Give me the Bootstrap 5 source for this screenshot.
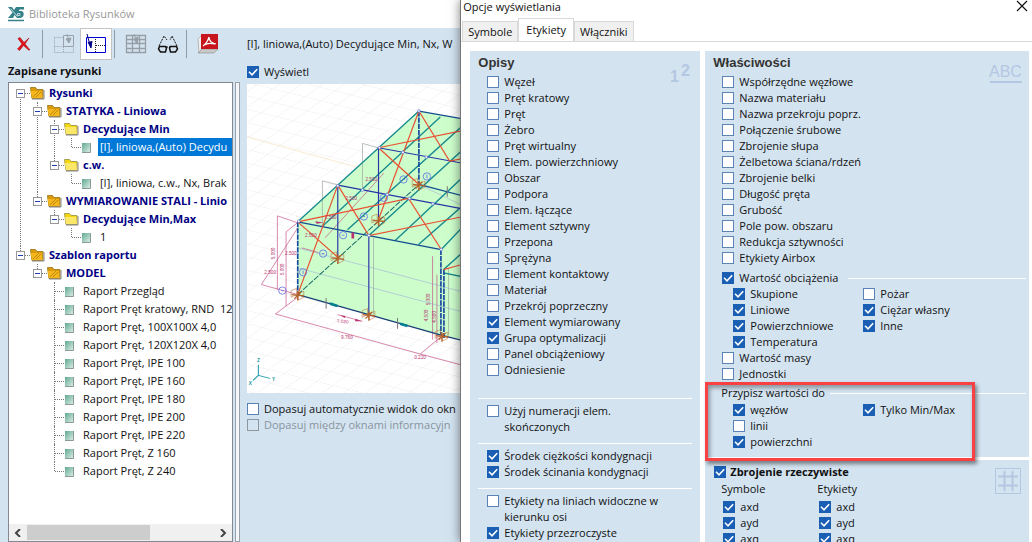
<!DOCTYPE html>
<html lang="pl">
<head>
<meta charset="utf-8">
<meta name="viewport" content="width=device-width, initial-scale=1">
<title>Biblioteka Rysunków</title>
<link rel="stylesheet" href="https://cdn.jsdelivr.net/npm/bootstrap@5.3.0/dist/css/bootstrap.min.css">
<style>
:root{--pane:#d3e3f0;--ink:#111;--navy:#000084}
body{font-family:"Open Sans","Noto Sans",sans-serif;font-size:11px;line-height:16px;color:var(--ink);background:var(--pane)}
.app{height:100vh}
.titlebar{height:28px;padding-left:8px;color:#999;gap:5px}
.sidepane{flex:0 0 240px}
.tools{height:32px;padding-left:8px}
.tool{width:32px;height:32px;border:1px solid transparent;border-radius:0;padding:0;display:flex;align-items:center;justify-content:center}
.tool.active{background:#fff;border:1px solid #c3c3c3}
.toolgap{width:8px;padding:2px 0 2px 2px}
.toolgap::before{content:"";display:block;height:28px;border-left:1px solid #8f9ba6}
.pane-title{padding:3px 8px;height:22px}
.treebox{width:225px;margin-left:8px;border:1px solid #828790;background:#fff}
.splitter{width:5px;margin:0 0 0 2px;border:1px solid #9aa0a8;background:#f4f7fa}
.tree,.tree ul{list-style:none;margin:0;padding:0}
.tree{padding:1px 0 0 3px;white-space:nowrap}
.tree li{position:relative;padding-left:17px}
.tree li::before{content:"";position:absolute;left:8px;top:0;bottom:0;border-left:1px dotted #777}
.tree li:last-child::before{bottom:auto;height:9px}
.tree>li:first-child::before{top:9px}
.tree li::after{content:"";position:absolute;left:9px;top:9px;width:9px;border-top:1px dotted #777}
.tree .node{display:flex;align-items:center;height:18px}
.tree .node svg{flex:none;width:18px;height:18px}
.tree .node a{color:var(--ink);text-decoration:none;padding:0 2px;line-height:18px}
.tree .dir a{color:var(--navy);font-weight:700}
.tree .node a.picked{background:#0078d7;color:#fff;flex:1}
.fold{position:relative;z-index:1;flex:none;width:9px;height:9px;margin:1px 4px 0 -13px;padding:0;border:1px solid #989898;background:#fff}
.fold::before{content:"";display:block;width:5px;margin:0 1px;border-top:1px solid #1d3fb0}
.hbar{height:17px;background:#f0f0f0}
.hbar button{border:0;background:none;width:18px;padding:0;display:flex;align-items:center;justify-content:center}
.hbar .thumb{width:123px;background:#cdcdcd;margin:1px 0}
.mainpane{padding:8px 0 0 7px;white-space:nowrap}
.view{height:309px;background:#fff}
.view svg{display:block;width:100%;height:100%}
.opt{display:flex;align-items:flex-start;gap:5px;min-height:16px}
.opt input[type=checkbox]{flex:none;width:12px;height:12px;margin:2px 0 0;border:1px solid #5b82b4;border-radius:0;background-color:#fff;box-shadow:none;float:none}
.opt input[type=checkbox]:checked{background-color:#1a5fb4;border-color:#1a5fb4;background-size:12px 12px;background-position:center;background-image:url("data:image/svg+xml,%3Csvg xmlns='http://www.w3.org/2000/svg' viewBox='0 0 12 12'%3E%3Cpath d='M2 5.8l3 3 5.2-5.6' fill='none' stroke='%23fff' stroke-width='1.6'/%3E%3C/svg%3E")}
.opt input[type=checkbox]:disabled{border-color:#8f979e;background-color:#d3e3f0;opacity:1}
.opt input[type=checkbox]:disabled~label{opacity:1;color:#8a949d}
.dialog{flex:0 0 55.4%;background:#fff;border-left:1px solid #777;box-shadow:0 0 10px rgba(0,0,0,.5);z-index:2}
.dialog-head{height:19px;padding:0 4px 0 2px;line-height:13px}
.dialog-tabs{border-bottom:1px solid #d9d9d9;padding-left:1px;height:23px;flex-wrap:nowrap}
.dialog-tabs .nav-link{color:var(--ink);border:1px solid #d9d9d9;border-bottom:0;border-radius:0;background:#f0f0f0;padding:2px 5px;height:20px;margin:0;line-height:16px}
.dialog-tabs .nav-link.active{background:#fff;height:23px;padding:3px 7px;color:var(--ink)}
.dialog-body{padding:9px 3px 0 9px;gap:5px}
.labels{flex:0 0 230px}
.box{background:var(--pane);padding:4px 0 0 8px;position:relative}
.box h2{font:700 13px/16px "Liberation Sans",Arial,sans-serif;color:#333;margin:0 0 3px}
.labels .opt{margin-left:9px}
.rule{border-top:1px solid #fff;margin:8px 8px 4px 0}
.rule.far{margin-top:20px}
.props .opt{margin-left:9px}
.props .inner .opt{margin-left:20px}
.inner{display:grid;grid-template-columns:130px 1fr;grid-auto-rows:16px;margin-top:1px}
.lined::after{content:"";flex:1;border-top:1px solid #fff;margin:8px 3px 0 5px}
.assign{position:relative;z-index:1;padding:3px 0 7px}
.assign .lined{margin-left:8px}
.callout{position:absolute;left:-8px;top:0;width:270px;bottom:-4px;border:3px solid #f94144;box-shadow:2px 3px 4px rgba(0,0,0,.45),inset 2px 3px 4px rgba(0,0,0,.35);pointer-events:none}
.upper{z-index:1}
.corner{position:absolute;right:6px;color:#b4c7e2;font-family:"Liberation Sans",Arial,sans-serif}
.digits{top:9px;right:8px}
.abc{top:11px}
.mesh{top:7px;right:8px}
.second-box{margin-top:3px}
.props .opt.head{margin-left:1px;gap:4px}
.rebar{display:grid;grid-template-columns:96px 1fr;grid-auto-rows:16px;margin:1px 0 0 8px}
.props .rebar .opt{margin:2px 0 0 2px}
</style>
</head>
<body>
<svg width="0" height="0" class="position-absolute" aria-hidden="true">
  <defs>
    <linearGradient id="leafFill" x1="0" y1="0" x2="1" y2="1"><stop offset="0" stop-color="#5fa890"/><stop offset="1" stop-color="#d9ece4"/></linearGradient>
    <symbol id="dirDark" viewBox="0 0 18 18"><path d="M1.500 3.500h5l1.500 2h6v9h-11z" fill="#d99a0b" stroke="#a9842a"/><path d="M3 14l-1.500-7h11l1 7z" fill="#f3b71d"/><path d="M4 13l6-6M7 13l5-5" stroke="#c48a10"/><path d="M3 15h12V6" fill="none" stroke="#858585"/></symbol>
    <symbol id="dirLight" viewBox="0 0 18 18"><path d="M1.500 3.500h5l1.500 2h6v9h-11z" fill="#f5d90e" stroke="#a9a050"/><path d="M3 14l-1-7h11l1 7z" fill="#fbe768"/><path d="M3 15h12V6" fill="none" stroke="#858585"/></symbol>
    <symbol id="leaf" viewBox="0 0 18 18"><path d="M2 5h8v9H2z" fill="url(#leafFill)"/><path d="M2 14.500h8.500V5" fill="none" stroke="#8a9a94"/></symbol>
  </defs>
</svg>
<div class="app d-flex overflow-hidden">
  <section class="d-flex flex-column flex-fill overflow-hidden" style="min-width:0">
    <header class="titlebar bg-white d-flex align-items-center flex-shrink-0">
      <svg width="16" height="15" viewBox="0 0 16 15" aria-hidden="true"><path d="M0 0h4l2 3 2-3h8v2.500h-4.500l-.5 1.500h2c4 0 3.500 7-1 7H9L6.500 8 5 11H0l4.500-5.500z" fill="#35818a"/><path d="M9.500 6.500h2.500v2H9.500zM2.500 1.500l7 8" stroke="#d9efef" stroke-width=".8" fill="none"/><path d="M0 13.500h16" stroke="#35818a" stroke-width="1.500"/></svg>
      <span>Biblioteka Rysunków</span>
    </header>
    <div class="d-flex flex-fill" style="min-height:0">
      <div class="sidepane d-flex flex-column">
        <div class="tools d-flex flex-shrink-0" role="toolbar" aria-label="Narzędzia">
          <button class="btn tool" aria-label="Usuń"><svg width="16" height="16" viewBox="0 0 16 16"><path d="M2 2.500l2-1 4 5 5-4.500-4 6L14 14h-1.500L7.500 9.500 3.500 14.500 1.500 13l4.500-5z" fill="#e3131b" stroke="#a80d12" stroke-width=".6"/></svg></button>
          <span class="toolgap"></span>
          <button class="btn tool" aria-label="Okno"><svg width="22" height="22" viewBox="0 0 22 22" fill="none" stroke="#9aa3ab"><path d="M1.500 4.500h9M1.500 4.500v15h19v-6M1.500 13.500h9M10.500 14v5" stroke-dasharray="1 1"/><path d="M10.500 2.500h10v11h-10z" stroke="#9aa3ab"/><path d="M14 1l2 6M13 6l3 4 2-5z" fill="#9aa3ab"/></svg></button>
          <button class="btn tool active" aria-label="Widok"><svg width="22" height="22" viewBox="0 0 22 22" fill="none"><path d="M1.500 4.500h19v15h-19z" stroke="#0000d6"/><path d="M10.500 6v13M11 12.500h9" stroke="#222" stroke-dasharray="1 1"/><path d="M2 1l3 11" stroke="#000084"/><path d="M3 9l3 6 1-7" stroke="#000084" fill="#000084"/></svg></button>
          <span class="toolgap"></span>
          <button class="btn tool" aria-label="Tabela"><svg width="22" height="22" viewBox="0 0 22 22" fill="none" stroke="#969ea6"><path d="M1.500 2.500h19v17h-19zM1.500 6.500h19M1.500 10.500h19M1.500 15.500h19M7.500 3v16M14.500 3v16" stroke-width="1.300"/><path d="M9 1l3 9M9 6l3 5 1-7z" fill="#969ea6"/></svg></button>
          <button class="btn tool" aria-label="Znajdź"><svg width="22" height="22" viewBox="0 0 22 22" fill="none" stroke="#111"><path d="M2.500 13.500h6l1 1.500-1 4h-5l-2-3zM13.500 13.500h6l1 2.500-2 3h-5l-1-4z" stroke-width="1.500"/><path d="M9 14h4M2 13L7 3l3 4M20 13L15 3l-2 4" stroke-dasharray="2 1"/></svg></button>
          <span class="toolgap"></span>
          <button class="btn tool" aria-label="Eksport PDF"><svg width="22" height="22" viewBox="0 0 22 22"><path d="M1 6l4-4v14l-3 4z" fill="#eee" stroke="#999" stroke-width=".6"/><path d="M5 16h16l-4 4H1z" fill="#c9c9c9" stroke="#888" stroke-width=".6"/><path d="M4 1h17v15H4z" fill="#c8141d"/><path d="M12 4c-1 4-2 6-6 9M12 4c0 4 2 6 7 7M7 12c3-2 7-2 11-1" fill="none" stroke="#fff" stroke-width="1.200"/></svg></button>
        </div>
        <div class="pane-title fw-bold flex-shrink-0">Zapisane rysunki</div>
        <div class="d-flex flex-fill" style="min-height:0">
          <div class="treebox d-flex flex-column">
            <div class="flex-fill overflow-hidden" style="min-height:0">
            <ul class="tree">
              <li><div class="node dir"><button class="fold" aria-label="Zwiń"></button><svg><use href="#dirDark"/></svg><a href="#">Rysunki</a></div>
                <ul>
                  <li><div class="node dir"><button class="fold" aria-label="Zwiń"></button><svg><use href="#dirDark"/></svg><a href="#">STATYKA - Liniowa</a></div>
                    <ul>
                      <li><div class="node dir"><button class="fold" aria-label="Zwiń"></button><svg><use href="#dirLight"/></svg><a href="#">Decydujące Min</a></div>
                        <ul><li><div class="node"><svg><use href="#leaf"/></svg><a href="#" class="picked">[I], liniowa,(Auto) Decydu</a></div></li></ul></li>
                      <li><div class="node dir"><button class="fold" aria-label="Zwiń"></button><svg><use href="#dirLight"/></svg><a href="#">c.w.</a></div>
                        <ul><li><div class="node"><svg><use href="#leaf"/></svg><a href="#">[I], liniowa, c.w., Nx, Brak</a></div></li></ul></li>
                    </ul></li>
                  <li><div class="node dir"><button class="fold" aria-label="Zwiń"></button><svg><use href="#dirDark"/></svg><a href="#">WYMIAROWANIE STALI - Linio</a></div>
                    <ul>
                      <li><div class="node dir"><button class="fold" aria-label="Zwiń"></button><svg><use href="#dirLight"/></svg><a href="#">Decydujące Min,Max</a></div>
                        <ul><li><div class="node"><svg><use href="#leaf"/></svg><a href="#">1</a></div></li></ul></li>
                    </ul></li>
                </ul></li>
              <li><div class="node dir"><button class="fold" aria-label="Zwiń"></button><svg><use href="#dirDark"/></svg><a href="#">Szablon raportu</a></div>
                <ul>
                  <li><div class="node dir"><button class="fold" aria-label="Zwiń"></button><svg><use href="#dirDark"/></svg><a href="#">MODEL</a></div>
                    <ul>
                      <li><div class="node"><svg><use href="#leaf"/></svg><a href="#">Raport Przegląd</a></div></li>
                      <li><div class="node"><svg><use href="#leaf"/></svg><a href="#">Raport Pręt kratowy, RND&nbsp; 12</a></div></li>
                      <li><div class="node"><svg><use href="#leaf"/></svg><a href="#">Raport Pręt, 100X100X 4,0</a></div></li>
                      <li><div class="node"><svg><use href="#leaf"/></svg><a href="#">Raport Pręt, 120X120X 4,0</a></div></li>
                      <li><div class="node"><svg><use href="#leaf"/></svg><a href="#">Raport Pręt, IPE 100</a></div></li>
                      <li><div class="node"><svg><use href="#leaf"/></svg><a href="#">Raport Pręt, IPE 160</a></div></li>
                      <li><div class="node"><svg><use href="#leaf"/></svg><a href="#">Raport Pręt, IPE 180</a></div></li>
                      <li><div class="node"><svg><use href="#leaf"/></svg><a href="#">Raport Pręt, IPE 200</a></div></li>
                      <li><div class="node"><svg><use href="#leaf"/></svg><a href="#">Raport Pręt, IPE 220</a></div></li>
                      <li><div class="node"><svg><use href="#leaf"/></svg><a href="#">Raport Pręt, Z 160</a></div></li>
                      <li><div class="node"><svg><use href="#leaf"/></svg><a href="#">Raport Pręt, Z 240</a></div></li>
                    </ul></li>
                </ul></li>
            </ul>
            </div>
            <div class="hbar d-flex flex-shrink-0">
              <button aria-label="W lewo"><svg width="8" height="8" viewBox="0 0 8 8"><path d="M6 0L2 4l4 4" fill="none" stroke="#444" stroke-width="2"/></svg></button>
              <div class="thumb"></div>
              <button class="ms-auto" aria-label="W prawo"><svg width="8" height="8" viewBox="0 0 8 8"><path d="M2 0l4 4-4 4" fill="none" stroke="#444" stroke-width="2"/></svg></button>
            </div>
          </div>
          <div class="splitter"></div>
        </div>
      </div>
      <main class="mainpane flex-fill overflow-hidden">
        <div class="mb-2 pb-1">[I], liniowa,(Auto) Decydujące Min, Nx, W</div>
        <div class="opt mb-1"><input class="form-check-input" type="checkbox" id="show" checked><label for="show">Wyświetl</label></div>
        <div class="view">
          <svg viewBox="21 9 639 927" preserveAspectRatio="xMinYMin slice" font-family="Liberation Sans, sans-serif" font-size="14" role="img" aria-label="Model 3D hali">
            <defs>
              <pattern id="gridLines" width="48" height="48" patternUnits="userSpaceOnUse" patternTransform="matrix(1 .25 .87 -.62 0 0)"><path d="M0 0h48M0 0v48" stroke="#e0e0e5" stroke-width="2" fill="none"/></pattern>
              <g id="foot" fill="none" stroke="#b5622a"><path d="M-20-12l16-6v18l-16 8zM2-4l16-6v18L2 16z" stroke-width="1.500"/><path d="M-18 0l36 4M0-10v28M-10 12l20-20" stroke-width="4"/></g>
            </defs>
            <path d="M21 9h639v927H21z" fill="url(#gridLines)"/>
            <path d="M21 168l395 108" stroke="#f8dfba" stroke-width="2"/>
            <path d="M173 422L536 90l124 22v662l-55-12-219-62-213-60z" fill="#ccfdcb"/>
            <g stroke="#a6b8d8" stroke-width="2" fill="none"><path d="M173 500l487 130M173 560l487 130M536 310l124 60"/></g>
            <g stroke="#9aa39c" stroke-width="2" fill="none"><path d="M247 437v-138l46 12M367 325v-138l50 14M400 470v230M625 560v200"/></g>
            <g stroke="#c54d83" stroke-width="2" fill="none"><path d="M112 404v222M138 452v222M112 404l58 20M138 452l35-28M64 610l109-170M64 610l110 30M106 698l67-50M106 698l434 120 120 32M292 700l75 20M577 525v250M590 580v205M540 818l60-50M255 470l176-194M185 500l50 14"/></g>
            <g stroke="#16898d" stroke-width="4" fill="none"><path d="M173 422L536 90M247 435L600 108M322 446L660 140M386 463L660 213M465 478L660 295M535 490L660 380M603 505l57-60M610 565l50-45M610 575l50 10"/></g>
            <path d="M173 640L536 310" stroke="#176b68" stroke-width="3" stroke-dasharray="18 4"/>
            <g stroke="#2733a7" stroke-width="3.500" fill="none"><path d="M415 200v215M293 312v216M386 463v237M415 200l245 45M293 312l367 70"/><path d="M536 90l124 22M173 422l430 83M536 310l124 32" stroke="#134d91" stroke-width="4"/><path d="M173 640l213 60 219 62 55 14" stroke="#163e77"/></g>
            <g stroke="#1748a0" stroke-width="5" stroke-dasharray="16 3"><path d="M536 90v220M173 422v218M602 505v257M611 565v205"/></g>
            <g stroke="#ea4f31" stroke-width="3.500" fill="none"><path d="M536 90L415 415M536 90l92 150 32-6M660 150l-245 50 121 110M293 312L173 640M293 312l93 151 274-55M173 422l332-70 98 153M173 422l120 106M610 565l50-14"/></g>
            <path d="M270 667l22 7M480 727l22 7" stroke="#007e90" stroke-width="8"/>
            <path d="M258 650v32M472 710v32M621 315v32" stroke="#777" stroke-width="3"/>
            <use href="#foot" x="173" y="640"/><use href="#foot" x="293" y="530"/><use href="#foot" x="415" y="417"/><use href="#foot" x="536" y="310"/><use href="#foot" x="386" y="700"/><use href="#foot" x="605" y="763"/>
            <g fill="none" stroke="#6571e4" stroke-width="2.500"><circle cx="490" cy="295" r="11"/><circle cx="560" cy="286" r="11"/><circle cx="431" cy="350" r="11"/><circle cx="371" cy="406" r="11"/><circle cx="309" cy="462" r="11"/><circle cx="249" cy="517" r="11"/><circle cx="189" cy="573" r="11"/><circle cx="127" cy="628" r="11"/><path d="M486 295h8M560 280v12M427 350h8M367 406h8M305 462h8M245 517h8M189 568v10M123 628h8"/></g>
            <g fill="#fff" stroke="#596fd0" stroke-width="2"><circle cx="536" cy="90" r="4"/><circle cx="418" cy="200" r="4"/><circle cx="293" cy="314" r="4"/><circle cx="176" cy="420" r="4"/><circle cx="488" cy="214" r="4"/><circle cx="558" cy="228" r="4"/><circle cx="367" cy="327" r="4"/><circle cx="441" cy="340" r="4"/><circle cx="508" cy="352" r="4"/><circle cx="578" cy="368" r="4"/><circle cx="386" cy="463" r="4"/><circle cx="603" cy="505" r="4"/></g>
            <g fill="#b8326f"><text x="376" y="301">2.500</text><text x="316" y="357">2.500</text><text x="254" y="414">2.500</text><text x="195" y="468">2.500</text><text x="135" y="522">2.500</text><text x="73" y="578">2.500</text><text x="290" y="722" transform="rotate(8 290 722)">1.020</text><text x="303" y="773">9.760</text><text x="522" y="833">0.220</text><text transform="translate(106 534) rotate(-90)">5.000</text><text transform="translate(131 582) rotate(-90)">5.000</text><text transform="translate(570 672) rotate(-90)">5.000</text><text transform="translate(564 720) rotate(-90)">4.500</text><text transform="translate(586 724) rotate(-90)">4.500</text><path d="M300 702l16 2-2 6zM345 712l20 8-20 0zM334 454h8v18h-8zM225 420l25 4-20 4z"/></g>
            <g stroke="#1497a5" stroke-width="3" fill="none"><path d="M55 850v32l-16 15M55 882l35 9"/></g>
            <g fill="#1497a5" font-weight="700"><text x="51" y="842">Z</text><text x="96" y="899">Y</text><text x="26" y="910">X</text></g>
          </svg>
        </div>
        <div class="opt mt-2"><input class="form-check-input" type="checkbox" id="fit"><label for="fit">Dopasuj automatycznie widok do okn</label></div>
        <div class="opt"><input class="form-check-input" type="checkbox" id="fitinfo" disabled><label for="fitinfo">Dopasuj między oknami informacyjn</label></div>
      </main>
    </div>
  </section>

  <section class="dialog d-flex flex-column" role="dialog" aria-label="Opcje wyświetlania">
    <div class="dialog-head d-flex justify-content-between flex-shrink-0"><span>Opcje wyświetlania</span>
      <button class="border-0 bg-transparent p-0 d-flex" aria-label="Zamknij"><svg width="12" height="12" viewBox="0 0 12 12"><path d="M1 1l10 10M11 1L1 11" stroke="#111" stroke-width="1.200"/></svg></button></div>
    <div class="nav dialog-tabs align-items-end flex-shrink-0" role="tablist">
      <button class="nav-link" role="tab">Symbole</button>
      <button class="nav-link active" role="tab" aria-selected="true">Etykiety</button>
      <button class="nav-link" role="tab">Włączniki</button>
    </div>
    <div class="dialog-body d-flex flex-fill overflow-hidden">
      <div class="labels box">
        <h2>Opisy</h2>
        <svg class="corner digits" width="24" height="24" viewBox="0 0 24 24" fill="currentColor" font-weight="700" font-size="16" aria-hidden="true"><text x="2" y="22">1</text><text x="13" y="16">2</text></svg>
        <div class="opt"><input class="form-check-input" type="checkbox" id="a1"><label for="a1">Węzeł</label></div>
        <div class="opt"><input class="form-check-input" type="checkbox" id="a2"><label for="a2">Pręt kratowy</label></div>
        <div class="opt"><input class="form-check-input" type="checkbox" id="a3"><label for="a3">Pręt</label></div>
        <div class="opt"><input class="form-check-input" type="checkbox" id="a4"><label for="a4">Żebro</label></div>
        <div class="opt"><input class="form-check-input" type="checkbox" id="a5"><label for="a5">Pręt wirtualny</label></div>
        <div class="opt"><input class="form-check-input" type="checkbox" id="a6"><label for="a6">Elem. powierzchniowy</label></div>
        <div class="opt"><input class="form-check-input" type="checkbox" id="a7"><label for="a7">Obszar</label></div>
        <div class="opt"><input class="form-check-input" type="checkbox" id="a8"><label for="a8">Podpora</label></div>
        <div class="opt"><input class="form-check-input" type="checkbox" id="a9"><label for="a9">Elem. łączące</label></div>
        <div class="opt"><input class="form-check-input" type="checkbox" id="a10"><label for="a10">Element sztywny</label></div>
        <div class="opt"><input class="form-check-input" type="checkbox" id="a11"><label for="a11">Przepona</label></div>
        <div class="opt"><input class="form-check-input" type="checkbox" id="a12"><label for="a12">Sprężyna</label></div>
        <div class="opt"><input class="form-check-input" type="checkbox" id="a13"><label for="a13">Element kontaktowy</label></div>
        <div class="opt"><input class="form-check-input" type="checkbox" id="a14"><label for="a14">Materiał</label></div>
        <div class="opt"><input class="form-check-input" type="checkbox" id="a15"><label for="a15">Przekrój poprzeczny</label></div>
        <div class="opt"><input class="form-check-input" type="checkbox" id="a16" checked><label for="a16">Element wymiarowany</label></div>
        <div class="opt"><input class="form-check-input" type="checkbox" id="a17" checked><label for="a17">Grupa optymalizacji</label></div>
        <div class="opt"><input class="form-check-input" type="checkbox" id="a18"><label for="a18">Panel obciążeniowy</label></div>
        <div class="opt"><input class="form-check-input" type="checkbox" id="a19"><label for="a19">Odniesienie</label></div>
        <div class="rule far"></div>
        <div class="opt"><input class="form-check-input" type="checkbox" id="a20"><label for="a20">Użyj numeracji elem.<br>skończonych</label></div>
        <div class="rule"></div>
        <div class="opt"><input class="form-check-input" type="checkbox" id="a21" checked><label for="a21">Środek ciężkości kondygnacji</label></div>
        <div class="opt"><input class="form-check-input" type="checkbox" id="a22" checked><label for="a22">Środek ścinania kondygnacji</label></div>
        <div class="rule"></div>
        <div class="opt"><input class="form-check-input" type="checkbox" id="a23"><label for="a23">Etykiety na liniach widoczne w<br>kierunku osi</label></div>
        <div class="opt"><input class="form-check-input" type="checkbox" id="a24" checked><label for="a24">Etykiety przezroczyste</label></div>
      </div>
      <div class="props d-flex flex-column flex-fill">
        <div class="box upper">
          <h2>Właściwości</h2>
          <svg class="corner abc" width="34" height="22" viewBox="0 0 34 22" fill="currentColor" font-size="16" aria-hidden="true"><text x="0" y="15">ABC</text><path d="M1 19h32v2H1z"/></svg>
          <div class="opt"><input class="form-check-input" type="checkbox" id="b1"><label for="b1">Współrzędne węzłowe</label></div>
          <div class="opt"><input class="form-check-input" type="checkbox" id="b2"><label for="b2">Nazwa materiału</label></div>
          <div class="opt"><input class="form-check-input" type="checkbox" id="b3"><label for="b3">Nazwa przekroju poprz.</label></div>
          <div class="opt"><input class="form-check-input" type="checkbox" id="b4"><label for="b4">Połączenie śrubowe</label></div>
          <div class="opt"><input class="form-check-input" type="checkbox" id="b5"><label for="b5">Zbrojenie słupa</label></div>
          <div class="opt"><input class="form-check-input" type="checkbox" id="b6"><label for="b6">Żelbetowa ściana/rdzeń</label></div>
          <div class="opt"><input class="form-check-input" type="checkbox" id="b7"><label for="b7">Zbrojenie belki</label></div>
          <div class="opt"><input class="form-check-input" type="checkbox" id="b8"><label for="b8">Długość pręta</label></div>
          <div class="opt"><input class="form-check-input" type="checkbox" id="b9"><label for="b9">Grubość</label></div>
          <div class="opt"><input class="form-check-input" type="checkbox" id="b10"><label for="b10">Pole pow. obszaru</label></div>
          <div class="opt"><input class="form-check-input" type="checkbox" id="b11"><label for="b11">Redukcja sztywności</label></div>
          <div class="opt"><input class="form-check-input" type="checkbox" id="b12"><label for="b12">Etykiety Airbox</label></div>
          <div class="opt lined pt-1"><input class="form-check-input" type="checkbox" id="b13" checked><label for="b13">Wartość obciążenia</label></div>
          <div class="inner mt-0">
            <div class="opt"><input class="form-check-input" type="checkbox" id="b14" checked><label for="b14">Skupione</label></div>
            <div class="opt"><input class="form-check-input" type="checkbox" id="b15"><label for="b15">Pożar</label></div>
            <div class="opt"><input class="form-check-input" type="checkbox" id="b16" checked><label for="b16">Liniowe</label></div>
            <div class="opt"><input class="form-check-input" type="checkbox" id="b17" checked><label for="b17">Ciężar własny</label></div>
            <div class="opt"><input class="form-check-input" type="checkbox" id="b18" checked><label for="b18">Powierzchniowe</label></div>
            <div class="opt"><input class="form-check-input" type="checkbox" id="b19" checked><label for="b19">Inne</label></div>
            <div class="opt"><input class="form-check-input" type="checkbox" id="b20" checked><label for="b20">Temperatura</label></div>
          </div>
          <div class="opt"><input class="form-check-input" type="checkbox" id="b21"><label for="b21">Wartość masy</label></div>
          <div class="opt"><input class="form-check-input" type="checkbox" id="b22"><label for="b22">Jednostki</label></div>
          <div class="assign">
            <div class="lined d-flex">Przypisz wartości do</div>
            <div class="inner">
              <div class="opt"><input class="form-check-input" type="checkbox" id="b23" checked><label for="b23">węzłów</label></div>
              <div class="opt"><input class="form-check-input" type="checkbox" id="b24" checked><label for="b24">Tylko Min/Max</label></div>
              <div class="opt"><input class="form-check-input" type="checkbox" id="b25"><label for="b25">linii</label></div><span></span>
              <div class="opt"><input class="form-check-input" type="checkbox" id="b26" checked><label for="b26">powierzchni</label></div>
            </div>
            <div class="callout"></div>
          </div>
        </div>
        <div class="box second-box flex-fill">
          <svg class="corner mesh" width="26" height="27" viewBox="0 0 26 27" fill="none" stroke="currentColor" aria-hidden="true"><path d="M.5 1.500h25v25H.5z"/><path d="M9.500 4v20M17.500 4v20M3 9.500h20M3 18.500h20" stroke-width="2"/></svg>
          <div class="opt head fw-bold"><input class="form-check-input" type="checkbox" id="c1" checked><label for="c1">Zbrojenie rzeczywiste</label></div>
          <div class="rebar">
            <span>Symbole</span><span>Etykiety</span>
            <div class="opt"><input class="form-check-input" type="checkbox" id="c2" checked><label for="c2">axd</label></div>
            <div class="opt"><input class="form-check-input" type="checkbox" id="c3" checked><label for="c3">axd</label></div>
            <div class="opt"><input class="form-check-input" type="checkbox" id="c4" checked><label for="c4">ayd</label></div>
            <div class="opt"><input class="form-check-input" type="checkbox" id="c5" checked><label for="c5">ayd</label></div>
            <div class="opt"><input class="form-check-input" type="checkbox" id="c6" checked><label for="c6">axq</label></div>
            <div class="opt"><input class="form-check-input" type="checkbox" id="c7" checked><label for="c7">axq</label></div>
          </div>
        </div>
      </div>
    </div>
  </section>
</div>
<script src="https://cdn.jsdelivr.net/npm/bootstrap@5.3.0/dist/js/bootstrap.bundle.min.js"></script>
</body>
</html>
